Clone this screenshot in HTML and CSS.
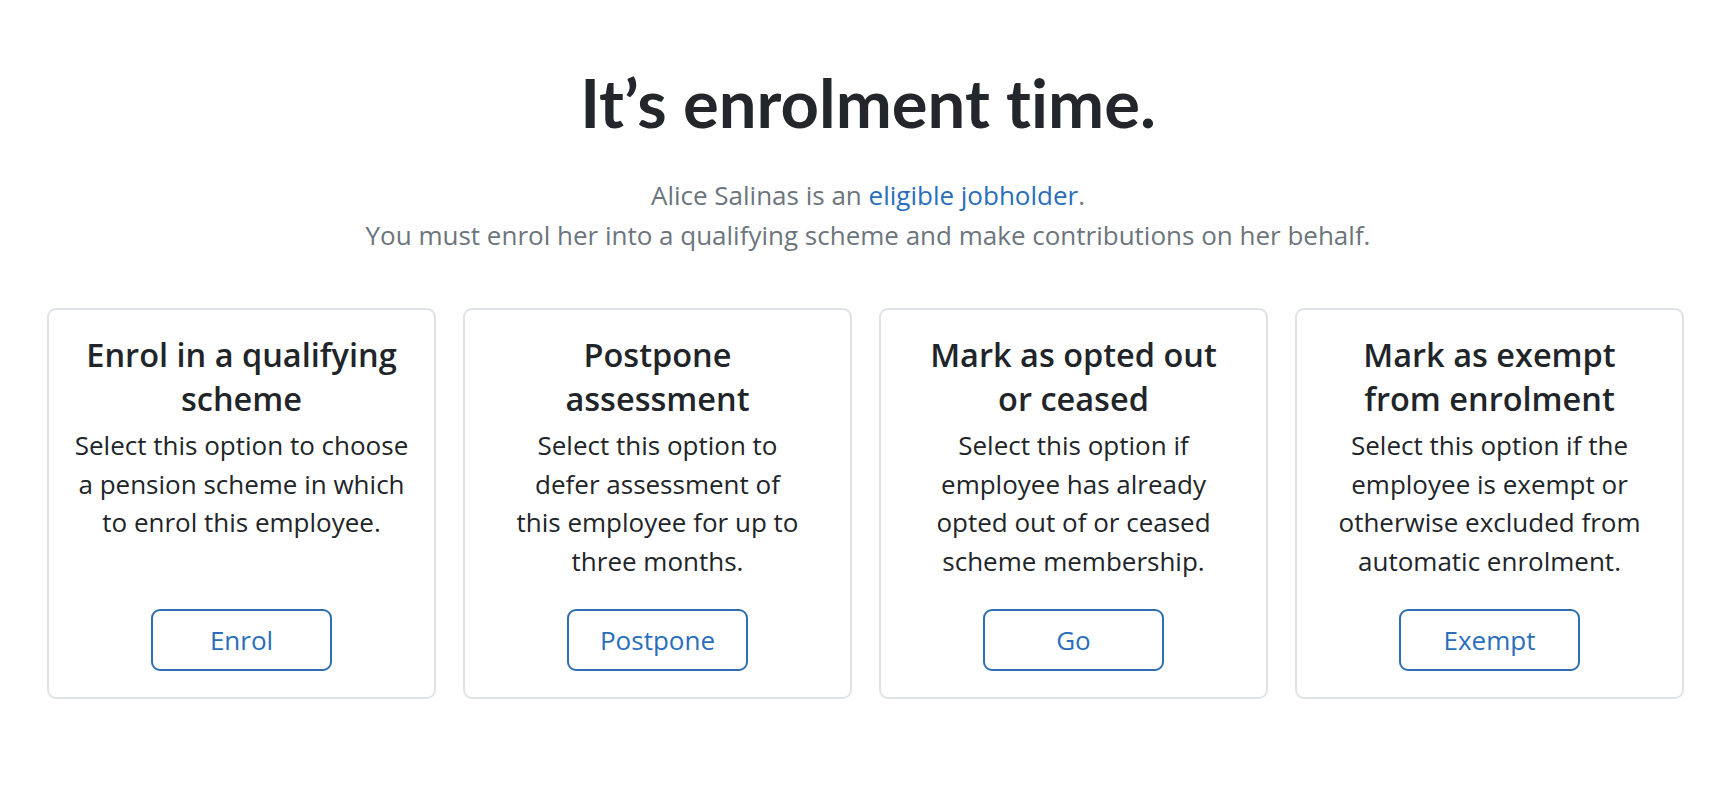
FILE: index.html
```html
<!DOCTYPE html>
<html lang="en">
<head>
    <meta charset="UTF-8">
    <title>Enrolment</title>
    <link rel="stylesheet" href="styles.css">
</head>
<body>

    <div class="intro">
        <h1>It’s enrolment time.</h1>
        <p class="lead">
            Alice Salinas is an <a href="#">eligible jobholder</a>.<br>
            You must enrol her into a qualifying scheme and make contributions on her behalf.
        </p>
    </div>

    <div class="options">
        <div class="option-card">
            <h2>Enrol in a qualifying<br>scheme</h2>
            <p>Select this option to choose<br>a pension scheme in which<br>to enrol this employee.</p>
            <button class="option-button">Enrol</button>
        </div>
        <div class="option-card">
            <h2>Postpone<br>assessment</h2>
            <p>Select this option to<br>defer assessment of<br>this employee for up to<br>three months.</p>
            <button class="option-button">Postpone</button>
        </div>
        <div class="option-card">
            <h2>Mark as opted out<br>or ceased</h2>
            <p>Select this option if<br>employee has already<br>opted out of or ceased<br>scheme membership.</p>
            <button class="option-button">Go</button>
        </div>
        <div class="option-card">
            <h2>Mark as exempt<br>from enrolment</h2>
            <p>Select this option if the<br>employee is exempt or<br>otherwise excluded from<br>automatic enrolment.</p>
            <button class="option-button">Exempt</button>
        </div>
    </div>

</body>
</html>
```

FILE: styles.css
```css
body {
    margin: 0;
    font-family: "Open Sans", "Noto Sans", sans-serif;
    background-color: #fff;
    color: #212529;
}
.intro {
    text-align: center;
    padding-top: 62px;
}
h1 {
    margin: 0;
    font-family: Lato, "Open Sans", sans-serif;
    font-weight: 700;
    font-size: 67px;
    line-height: 1.2;
    font-variant-ligatures: none;
    color: #23272b;
}
.lead {
    margin: 33px 0 0;
    font-size: 26px;
    line-height: 40px;
    color: #6c757d;
}
.lead a {
    color: #2a6ebb;
    text-decoration: none;
}
.options {
    display: grid;
    grid-template-columns: repeat(4, 1fr);
    gap: 27px;
    padding: 0 52px 0 47px;
    margin-top: 53px;
}
.option-card {
    display: flex;
    flex-direction: column;
    align-items: center;
    text-align: center;
    border: 2px solid #dfe3e7;
    border-radius: 9px;
    padding: 23px 16px 26px;
}
.option-card h2 {
    margin: 0;
    font-size: 32.5px;
    font-weight: 600;
    line-height: 44px;
}
.option-card p {
    margin: 5px 0 29px;
    font-size: 26px;
    line-height: 38.5px;
}
.option-button {
    margin-top: auto;
    width: 181px;
    height: 62px;
    font-family: inherit;
    font-size: 26px;
    color: #2a6ebb;
    background-color: #fff;
    border: 2px solid #2f6db5;
    border-radius: 9px;
    cursor: pointer;
}
.option-button:hover {
    background-color: #f2f7fc;
}
```
